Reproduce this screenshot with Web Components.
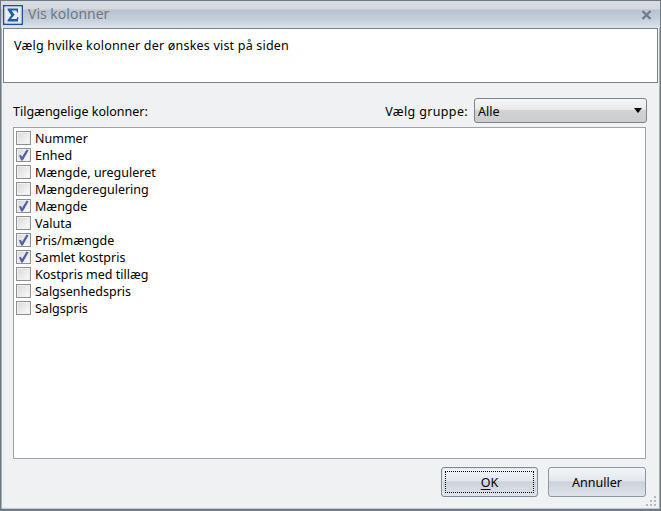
<!DOCTYPE html>
<html><head><meta charset="utf-8">
<style>
html,body{margin:0;padding:0;width:661px;height:511px;overflow:hidden}
body{font:12.5px "Noto Sans",sans-serif;color:#000}
</style></head><body>
<vis-dialog title-text="Vis kolonner">
<span slot="info">Vælg hvilke kolonner der ønskes vist på siden</span>
<col-check>Nummer</col-check>
<col-check checked>Enhed</col-check>
<col-check>Mængde, ureguleret</col-check>
<col-check>Mængderegulering</col-check>
<col-check checked>Mængde</col-check>
<col-check>Valuta</col-check>
<col-check checked>Pris/mængde</col-check>
<col-check checked>Samlet kostpris</col-check>
<col-check>Kostpris med tillæg</col-check>
<col-check>Salgsenhedspris</col-check>
<col-check>Salgspris</col-check>
</vis-dialog>
<script>
class VisDialog extends HTMLElement{
 constructor(){super();const t=this.getAttribute('title-text')||'';
 this.attachShadow({mode:'open'}).innerHTML=`<style>
 :host{display:flex;flex-direction:column;box-sizing:border-box;width:661px;height:511px;background:#eff1f3;border:1px solid #6f7a84;border-bottom-width:2px;box-shadow:inset 1px 0 #a9aeb3,inset -1px 0 #a9aeb3,inset 0 -1px #c4c8cc}
 .title{height:27px;flex:none;display:flex;align-items:center;padding:0 8px 0 2px;gap:5px;background:linear-gradient(#d9dde1 0,#d5d8dc 8px,#b8c3cf 9px,#c4ced9 18px,#dce3ec 27px);color:#6f7882;font-size:14px}
 .title span{flex:1;margin-bottom:2px}
 .logo{width:20px;height:20px;flex:none}
 .x{width:11px;height:10px;flex:none}
 .info{box-sizing:border-box;flex:none;height:55px;margin:0 2px;background:#fff;border:1px solid #7e8184;padding:8px 10px;letter-spacing:.2px}
 .row{display:flex;align-items:center;justify-content:space-between;height:25px;margin:15px 13px 0 12px;flex:none}
 .row span{padding-top:1px}
 .right{display:flex;align-items:center;gap:6px}
 .right>span{letter-spacing:.35px}
 .sel{box-sizing:border-box;width:173px;height:25px;border:1px solid #7f8387;border-radius:3px;background:linear-gradient(#f7f7f7,#e9e9e9 45%,#d2d2d2 50%,#cdcdcd);display:flex;align-items:center;justify-content:space-between;padding:0 4px 0 3px}
 .arrow{width:0;height:0;border:4.5px solid transparent;border-top:5px solid #000;border-bottom:0;margin-top:-1px}
 u{text-underline-offset:2px}
 .list{box-sizing:border-box;flex:none;height:332px;margin:4px 14px 0 12px;background:#fff;border:1px solid #a0a3a6;padding:1px 0 0 2px}
 .foot{flex:1;display:flex;justify-content:flex-end;align-items:flex-start;gap:10px;padding:8px 14px 0 0;position:relative}
 .btn{box-sizing:border-box;width:98px;height:30px;border:1px solid #8f979f;border-radius:3px;background:linear-gradient(#f4f6f8,#e3e7ec 45%,#ccd2d9 50%,#dfe4ea);display:flex;align-items:center;justify-content:center;position:relative}
 .btn.def{width:97px;border-color:#7f8a94;box-shadow:inset 0 0 0 1px #dfe5ea}
 .btn.def::after{content:"";position:absolute;inset:3px;border:1px dotted #000}
 .grip{position:absolute;right:3px;bottom:2px;width:12px;height:12px}
 </style>
 <div class="title"><svg class="logo" viewBox="0 0 20 20"><rect x=".75" y=".75" width="18.5" height="18.5" fill="#f2f6fa" stroke="#1d4f91" stroke-width="1.5"/><rect x="2" y="2" width="16" height="16" fill="#e8eef5" stroke="#c9d8e8"/><path d="M4.5 3.5H15V7.5H14L13.4 5.6H8.6L11.6 9.8L8 14H13.6L14.3 12H15.4L15 16.5H4.5V15.2L8.2 10.3L4.5 4.8Z" fill="#1f5f9e"/></svg><span>${t}</span><svg class="x" viewBox="0 0 11 10"><path d="M1.5 1L9.5 9M9.5 1L1.5 9" stroke="#6d7e92" stroke-width="2.4"/></svg></div>
 <div class="info"><slot name="info"></slot></div>
 <div class="row"><span>Tilgængelige kolonner:</span><div class="right"><span>Vælg <u>g</u>ruppe:</span><div class="sel"><span>Alle</span><i class="arrow"></i></div></div></div>
 <div class="list"><slot></slot></div>
 <div class="foot"><div class="btn def"><span><u>O</u>K</span></div><div class="btn"><span>Annuller</span></div>
 <svg class="grip" viewBox="0 0 12 12" fill="#b4b9be"><rect x="9" y="1" width="2" height="2"/><rect x="9" y="5" width="2" height="2"/><rect x="5" y="5" width="2" height="2"/><rect x="9" y="9" width="2" height="2"/><rect x="5" y="9" width="2" height="2"/><rect x="1" y="9" width="2" height="2"/></svg></div>`;
 }
}
class ColCheck extends HTMLElement{
 constructor(){super();const c=this.hasAttribute('checked');
 this.attachShadow({mode:'open'}).innerHTML=`<style>
 :host{display:flex;align-items:center;height:17px;gap:4px}
 .b{box-sizing:border-box;width:15px;height:14px;border:1px solid #8e8f8f;background:linear-gradient(135deg,#d8d8d8,#f6f6f6 85%);box-shadow:inset 0 0 0 1px #f0f0f0;flex:none;display:block}
 .t{padding-top:2px}
 svg{display:block;width:13px;height:12px}
 </style><span class="b">${c?'<svg viewBox="0 0 13 12"><path d="M2 6.5L3.8 5.8L5 8L9.6 .6L11.6 1.2L5.8 11.4H4.2Z" fill="#52619f"/></svg>':''}</span><span class="t"><slot></slot></span>`;
 }
}
customElements.define('vis-dialog',VisDialog);
customElements.define('col-check',ColCheck);
</script>
</body></html>
